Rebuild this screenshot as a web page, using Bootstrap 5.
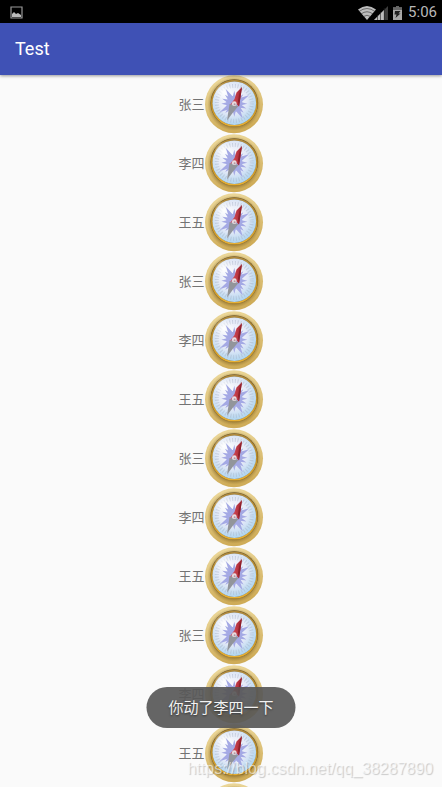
<!DOCTYPE html>
<html lang="zh-CN">
<head>
<meta charset="utf-8">
<meta name="viewport" content="width=device-width, initial-scale=1">
<title>Test</title>
<link href="https://cdn.jsdelivr.net/npm/bootstrap@5.3.0/dist/css/bootstrap.min.css" rel="stylesheet">
<style>
body { font-family: Roboto, "Noto Sans CJK SC", sans-serif; background: #fafafa; }
.status-bar { height: 23px; background: #000; color: #b8b8b8; font-size: 15px; line-height: 23px; padding: 1px 5px 0 10px; }
.app-bar { height: 52px; background: #3f51b5; padding: 0 15px; box-shadow: 0 1px 3px rgba(0,0,0,.4); z-index: 1; }
.app-title { font-size: 18px; line-height: 24px; font-weight: 400; color: #fff; }
.person { height: 59px; font-size: 13px; line-height: 18px; color: #737373; }
.person-next { padding-left: 26px; }
.compass { width: 59px; height: 59px; }
.snack { bottom: 59px; padding: 1px 22px 0; height: 41px; border-radius: 21px; background: rgba(88,88,88,.92); color: #f2f2f2; font-size: 15px; line-height: 41px; text-shadow: 0 1px 2px rgba(0,0,0,.5); }
.watermark { right: 9px; bottom: 8px; font: 16px/20px "Liberation Sans", Arial, sans-serif; color: rgba(255,255,255,.6); text-shadow: 1px 1px 1px rgba(0,0,0,.2); }
</style>
<script src="https://cdn.jsdelivr.net/npm/bootstrap@5.3.0/dist/js/bootstrap.bundle.min.js" defer></script>
</head>
<body>
<svg width="0" height="0" class="position-absolute" aria-hidden="true">
  <defs>
    <linearGradient id="brass" x1="0" y1="0" x2=".25" y2="1"><stop offset="0" stop-color="#eedb9f"/><stop offset=".5" stop-color="#e0c680"/><stop offset="1" stop-color="#cfac58"/></linearGradient>
    <radialGradient id="shade"><stop offset=".86" stop-color="#5e4510" stop-opacity=".4"/><stop offset="1" stop-color="#8f6d20" stop-opacity="0"/></radialGradient>
    <linearGradient id="rim" x1="0" y1="0" x2="0" y2="1"><stop offset="0" stop-color="#b08a3c"/><stop offset=".5" stop-color="#bd8c24"/><stop offset="1" stop-color="#e8b033"/></linearGradient>
    <radialGradient id="glass" cx=".45" cy=".4" r=".62"><stop offset="0" stop-color="#fff"/><stop offset=".55" stop-color="#e3e9f7"/><stop offset="1" stop-color="#abd3ef"/></radialGradient>
    <radialGradient id="glint"><stop offset="0" stop-color="#fff"/><stop offset="1" stop-color="#fff" stop-opacity="0"/></radialGradient>
    <linearGradient id="red" x1="0" y1="0" x2="1" y2="0"><stop offset="0" stop-color="#d9606a"/><stop offset=".5" stop-color="#c23c48"/><stop offset="1" stop-color="#9d2530"/></linearGradient>
    <symbol id="compass" viewBox="0 0 59 59">
      <circle cx="29" cy="29.3" r="29" fill="url(#brass)"/>
      <circle cx="29" cy="29" r="26.800" fill="url(#shade)"/>
      <circle cx="29.300" cy="28" r="23.800" fill="#6d582c"/>
      <circle cx="29.300" cy="28.200" r="22.500" fill="none" stroke="url(#rim)" stroke-width="1.800"/>
      <circle cx="29.300" cy="28.200" r="21.800" fill="url(#glass)"/>
      <circle cx="29.300" cy="28.400" r="17.500" fill="none" stroke="#a3afc4" stroke-width="4" stroke-dasharray="1 1.750" opacity=".45"/>
      <ellipse cx="19" cy="17" rx="10" ry="9" fill="url(#glint)"/>
      <g fill="#a4a9e4" transform="translate(29.300 28.700)">
        <g id="rays"><path d="M0-13L2.400-4H-2.400ZM0 13L2.400 4H-2.400ZM-13 0L-4-2.400V2.400ZM13 0L4-2.400V2.400Z"/></g>
        <path transform="rotate(60)" d="M0-17L2.800-5H-2.800ZM0 17L2.800 5H-2.800ZM-17 0L-5-2.800V2.800ZM17 0L5-2.800V2.800Z"/>
        <use href="#rays" transform="rotate(22)"/>
        <use href="#rays" transform="rotate(44)"/>
        <circle r="8"/>
      </g>
      <path d="M24.500 29L33.500 31L28 37.500L22 45.500Z" fill="#92959b"/>
      <path d="M37 12L31.500 17.500L29.500 24L25 30L30 28L34 31.500L35.500 22Z" fill="url(#red)"/>
      <path d="M37 12L35.500 22L34 31.500L33 26L34.500 18Z" fill="#8d1f2b"/>
      <circle cx="29.300" cy="28.700" r="2.400" fill="#e8dde0"/>
      <circle cx="29.600" cy="29.200" r="1" fill="#b394a0"/>
    </symbol>
  </defs>
</svg>
<div class="vh-100 d-flex flex-column overflow-hidden position-relative">
  <div class="status-bar d-flex align-items-center flex-shrink-0">
    <svg class="me-auto" width="13" height="13" viewBox="0 0 13 13" aria-hidden="true"><path d="M1 1H12V12H1Z" fill="none" stroke="#999" stroke-width="1.2"/><path d="M2 10V8L4 6L6 8L8 7L11 9V11H2Z" fill="#bbb"/></svg>
    <svg width="47" height="17" viewBox="0 0 47 17" aria-hidden="true">
      <path d="M1 5.500Q10-1.500 19 5.500L10 16Z" fill="#bdbdbd"/>
      <path d="M2 7.500Q10 1.500 18 7.500M4 10Q10 5.500 16 10M6.500 12.500Q10 10 13.500 12.500" fill="none" stroke="#333" stroke-width=".6"/>
      <path d="M31 2V16H17Z" fill="#3c3c3c"/><path d="M27 6V16H17Z" fill="#bdbdbd"/>
      <path d="M20.500 11V16M23.500 8V16M27.300 4V16" stroke="#222" stroke-width=".6"/>
      <path d="M36 3.500H39V2H42V3.500H45V16H36Z" fill="#a8a8a8"/><path d="M36 3.500H39V2H42V3.500H45V6H36Z" fill="#666"/>
      <path d="M38 7H43.500L41.500 9.500H43.500L38.500 14L39.500 10.500H37.500Z" fill="#222"/>
    </svg>
    <span class="ms-1">5:06</span>
  </div>
  <header class="app-bar d-flex align-items-center flex-shrink-0 position-relative"><h1 class="app-title m-0">Test</h1></header>
  <main class="flex-grow-1 overflow-hidden">
    <ul class="list-unstyled m-0">
      <li class="person d-flex justify-content-center align-items-center"><span>张三</span><svg class="compass" aria-hidden="true"><use href="#compass"/></svg></li>
      <li class="person d-flex justify-content-center align-items-center"><span>李四</span><svg class="compass" aria-hidden="true"><use href="#compass"/></svg></li>
      <li class="person d-flex justify-content-center align-items-center"><span>王五</span><svg class="compass" aria-hidden="true"><use href="#compass"/></svg></li>
      <li class="person d-flex justify-content-center align-items-center"><span>张三</span><svg class="compass" aria-hidden="true"><use href="#compass"/></svg></li>
      <li class="person d-flex justify-content-center align-items-center"><span>李四</span><svg class="compass" aria-hidden="true"><use href="#compass"/></svg></li>
      <li class="person d-flex justify-content-center align-items-center"><span>王五</span><svg class="compass" aria-hidden="true"><use href="#compass"/></svg></li>
      <li class="person d-flex justify-content-center align-items-center"><span>张三</span><svg class="compass" aria-hidden="true"><use href="#compass"/></svg></li>
      <li class="person d-flex justify-content-center align-items-center"><span>李四</span><svg class="compass" aria-hidden="true"><use href="#compass"/></svg></li>
      <li class="person d-flex justify-content-center align-items-center"><span>王五</span><svg class="compass" aria-hidden="true"><use href="#compass"/></svg></li>
      <li class="person d-flex justify-content-center align-items-center"><span>张三</span><svg class="compass" aria-hidden="true"><use href="#compass"/></svg></li>
      <li class="person d-flex justify-content-center align-items-center"><span>李四</span><svg class="compass" aria-hidden="true"><use href="#compass"/></svg></li>
      <li class="person d-flex justify-content-center align-items-center"><span>王五</span><svg class="compass" aria-hidden="true"><use href="#compass"/></svg></li>
      <li class="person person-next d-flex justify-content-center align-items-center"><svg class="compass" aria-hidden="true"><use href="#compass"/></svg></li>
    </ul>
  </main>
  <div class="snack position-absolute start-50 translate-middle-x text-nowrap" role="status">你动了李四一下</div>
  <div class="watermark position-absolute">https://blog.csdn.net/qq_38287890</div>
</div>
</body>
</html>
